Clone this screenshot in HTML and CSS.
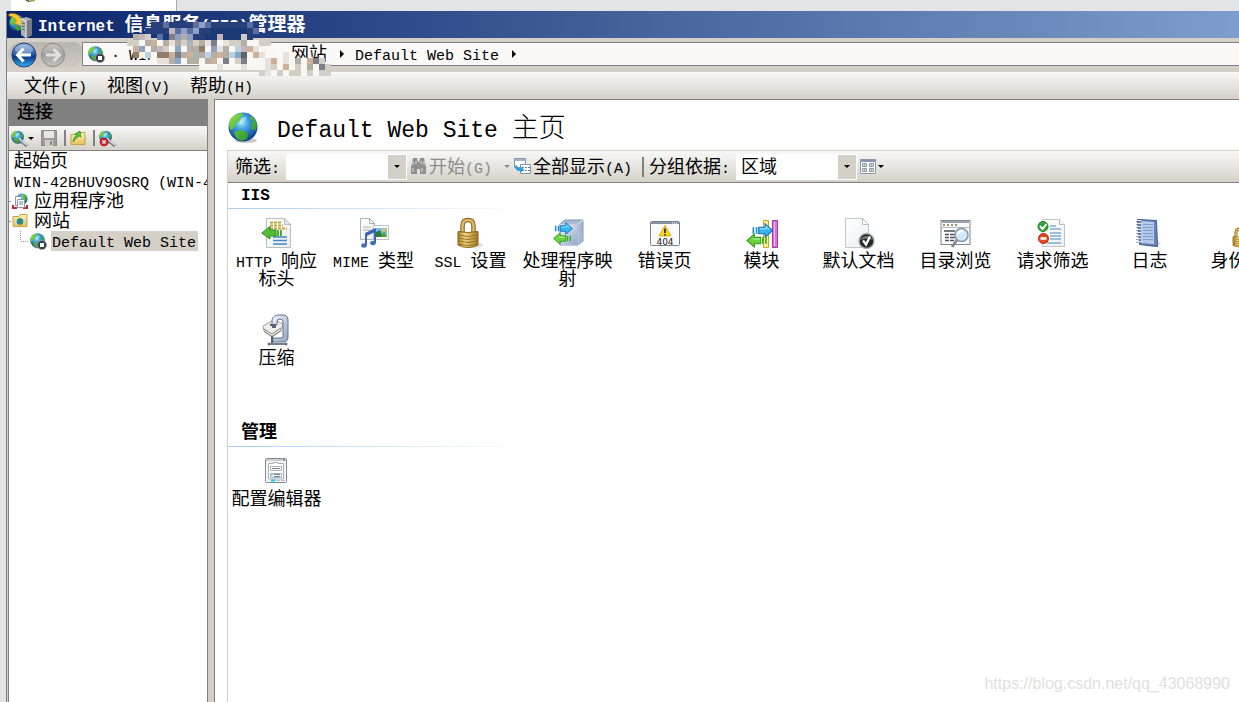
FILE: index.html
```html
<!DOCTYPE html>
<html lang="zh-CN">
<head>
<meta charset="utf-8">
<title>Internet 信息服务(IIS)管理器</title>
<link rel="stylesheet" href="styles.css">
</head>
<body>
<svg class="defs" aria-hidden="true">
  <defs>
    <radialGradient id="sea" cx="45%" cy="35%" r="65%">
      <stop offset="0" stop-color="#a5e9fa"/><stop offset=".4" stop-color="#3c9bdc"/><stop offset="1" stop-color="#123a8c"/>
    </radialGradient>
    <linearGradient id="land" x2="1" y2="1"><stop offset="0" stop-color="#8fe04a"/><stop offset="1" stop-color="#168a24"/></linearGradient>
    <linearGradient id="gold" x2="1"><stop offset="0" stop-color="#a87a1c"/><stop offset=".35" stop-color="#f0d686"/><stop offset="1" stop-color="#a3761d"/></linearGradient>
    <linearGradient id="steel" x2="1" y2="1"><stop offset="0" stop-color="#f4f7fc"/><stop offset="1" stop-color="#8ea3c4"/></linearGradient>
    <linearGradient id="paper" x2="1" y2="1"><stop offset="0" stop-color="#fff"/><stop offset="1" stop-color="#eceef0"/></linearGradient>
    <linearGradient id="folder" x2="0" y2="1"><stop offset="0" stop-color="#fdf3c0"/><stop offset="1" stop-color="#e9c254"/></linearGradient>
    <linearGradient id="blueball" x2="0" y2="1"><stop offset="0" stop-color="#8aa9d8"/><stop offset=".48" stop-color="#2658ab"/><stop offset=".55" stop-color="#0a2f86"/><stop offset="1" stop-color="#35b4f2"/></linearGradient>
    <linearGradient id="greyball" x2="0" y2="1"><stop offset="0" stop-color="#c9c8c5"/><stop offset=".5" stop-color="#a2a19e"/><stop offset="1" stop-color="#c4c3bf"/></linearGradient>
    <symbol id="globe" viewBox="0 0 32 32">
      <ellipse cx="18" cy="28.500" rx="11" ry="2.500" fill="#000" opacity=".22"/>
      <circle cx="15" cy="15" r="14.500" fill="url(#sea)"/>
      <path d="M1 13Q1 6 7 3l6-2 3 1-4 3 1 3-4 2-2 4-3 4-2-1zM23 4q5 3 6.300 9l-1.500 5-3.500 0-1-5 2-4-3-2zM6 20l6-2 4 1 4 3-1 5-5 2-5-2-2-4z" fill="url(#land)"/>
      <path d="M12 8q3-4 7-3l-2 4-6 4z" fill="#fff" opacity=".35"/>
    </symbol>
    <symbol id="site" viewBox="0 0 17 17">
      <use href="#globe" width="16" height="16"/>
      <circle cx="12" cy="12" r="4.600" fill="#3b4046" stroke="#9ca3a8" stroke-width=".7"/>
      <rect x="10" y="10" width="4" height="4" fill="#fff"/>
    </symbol>
    <symbol id="plug" viewBox="0 0 17 17">
      <use href="#globe" width="14" height="15"/>
      <path d="M8 9l3 3 5 4" stroke="#6f7f8d" stroke-width="3" fill="none"/><path d="M8 8l4 4 4 3" stroke="#dfe8ee" stroke-width="1.200" fill="none"/>
    </symbol>
    <symbol id="page" viewBox="0 0 32 32">
      <path d="M5.500 1.500h18l6 6v23h-24z" fill="url(#paper)" stroke="#b7bcc0"/><path d="M23.500 1.500v6h6z" fill="#e5e8ea" stroke="#b7bcc0"/>
    </symbol>
    <symbol id="right" viewBox="0 0 20 14"><path d="M1 4v6M4 4v6" stroke="#178bd2" stroke-width="1.500"/><path d="M6 4h6V.800L19 7l-7 6.200V10H6z" fill="#37b4f2" stroke="#1672ba"/><path d="M7 5.500h6V3.300L16 6" stroke="#9ce2ff" fill="none"/></symbol>
    <symbol id="left" viewBox="0 0 20 14"><path d="M19 4v6M16 4v6" stroke="#35a91d" stroke-width="1.500"/><path d="M14 4H8V.800L1 7l7 6.200V10h6z" fill="#66d63c" stroke="#35961f"/><path d="M13 5.500H7" stroke="#c6f9ae"/></symbol>
    <symbol id="lock" viewBox="0 0 32 32">
      <ellipse cx="18" cy="28" rx="10" ry="3" fill="#000" opacity=".12"/>
      <path d="M7.500 16V9q0-6 5.500-6t5.500 6v7" fill="none" stroke="#876018" stroke-width="4.500"/><path d="M7.500 16V9q0-6 5.500-6t5.500 6v7" fill="none" stroke="#dcb964" stroke-width="2.500"/>
      <path d="M3 14.500q10 2 20 0V28q-10 5-20 0z" fill="url(#gold)" stroke="#8b641a"/><path d="M3 18q10 3 20 0M3 21q10 3 20 0M3 24q10 3 20 0M3 27q10 3 20 0" stroke="#9b7323" fill="none"/>
    </symbol>
  </defs>
</svg>

<div class="backdrop"><div class="backdrop-tab"><svg width="12" height="2" viewBox="0 0 12 2"><path d="M0 0h4l1 2H3z" fill="#59636f"/><path d="M5 0h5v1l-5 1z" fill="#8ab64e"/></svg></div></div>

<div class="window">
  <header class="titlebar">
    <svg width="26" height="26" viewBox="0 0 26 26"><circle cx="9" cy="11" r="8" fill="url(#sea)"/><path d="M3 7q2-5 7-4l2 3-5 4-1 4-4-2zM6 15l6-1 3 3-5 2z" fill="url(#land)"/><path d="M1 2q8-2 12 5l3-1-3 8-7-3 3-2Q6 4 1 4z" fill="#ffc62f" stroke="#d58a10" stroke-width=".7"/><path d="M13 7l5-2 6 2v16l-6 3-5-3z" fill="#aeb2b5"/><path d="M18 9l6-2v16l-6 3z" fill="#777c80"/><path d="M13 7l5 2v17" fill="none" stroke="#eceeef"/><path d="M14 11l3 1M14 14l3 1M14 17l3 1" stroke="#606568"/></svg>
    <h1><span class="mono">Internet </span>信息服务<span class="mono">(IIS)</span>管理器</h1>
  </header>

  <nav class="navbar" aria-label="地址栏">
    <div class="travel">
      <button type="button" aria-label="后退"><svg width="26" height="26" viewBox="0 0 26 26"><circle cx="13" cy="13" r="12" fill="url(#blueball)" stroke="#25406e"/><ellipse cx="13" cy="7.500" rx="9" ry="5" fill="#fff" opacity=".3"/><path d="M12.500 6.500L6.500 13l6 6.500M7 13h13" fill="none" stroke="#fff" stroke-width="3"/></svg></button>
      <button type="button" aria-label="前进" disabled><svg width="26" height="26" viewBox="0 0 26 26"><circle cx="13" cy="13" r="11.500" fill="url(#greyball)" stroke="#8a8986"/><path d="M13.500 7l6 6-6 6M19 13H6" fill="none" stroke="#e1e0dd" stroke-width="3"/></svg></button>
    </div>
    <div class="address">
      <svg width="17" height="17"><use href="#site"/></svg>
      <span class="crumb-server"><span class="mono">· WIN</span></span>
      <span class="crumb-sites">网站</span>
      <i class="chev"></i>
      <span><span class="mono">Default Web Site</span></span>
      <i class="chev"></i>
    </div>
    <svg class="mosaic" id="mosaic" width="222" height="54" viewBox="0 0 222 54" aria-hidden="true"></svg>
  </nav>

  <div class="menubar" role="menubar">
    <button type="button" role="menuitem"><span>文件<span class="mono">(F)</span></span></button>
    <button type="button" role="menuitem"><span>视图<span class="mono">(V)</span></span></button>
    <button type="button" role="menuitem"><span>帮助<span class="mono">(H)</span></span></button>
  </div>

  <div class="workspace">
    <aside class="connections">
      <h2>连接</h2>
      <div class="side-tools">
        <button type="button" aria-label="新建连接"><svg width="17" height="17"><use href="#plug"/></svg><i class="drop"></i></button>
        <button type="button" aria-label="保存" disabled><svg width="16" height="16" viewBox="0 0 16 16"><path d="M.500.500h15v15H.500z" fill="#9b9b9b" stroke="#8c8c8c"/><path d="M3 1h10v7H3z" fill="#e8e7e4"/><path d="M4 10h8v6H4z" fill="#d0cfcb"/><path d="M9 11h2v4H9z" fill="#858585"/></svg></button>
        <i class="bar"></i>
        <button type="button" aria-label="向上"><svg width="16" height="16" viewBox="0 0 16 16"><path d="M1 4.500h8l1-2h5v12H1z" fill="url(#folder)" stroke="#c9a045"/><path d="M3 12q1-6 4-7L5 4l5-3 1 6-2-1q-3 2-6 6z" fill="#58c43a" stroke="#2d8b24" stroke-width=".7"/></svg></button>
        <i class="bar"></i>
        <button type="button" aria-label="断开连接"><svg width="17" height="17" viewBox="0 0 17 17"><use href="#plug"/><circle cx="5" cy="12" r="4" fill="#d4232b" stroke="#8f1218" stroke-width=".6"/><path d="M3.400 10.400l3.200 3.200m0-3.200l-3.200 3.200" stroke="#fff" stroke-width="1.300"/></svg></button>
      </div>
      <ul class="tree">
        <li>起始页</li>
        <li><span><span class="mono">WIN-42BHUV9OSRQ (WIN-4</span></span></li>
        <li class="branch"><svg width="16" height="17" viewBox="0 0 16 17"><circle cx="10" cy="6" r="5.500" fill="url(#sea)"/><path d="M10 1l4 1 1 5-3 2z" fill="url(#land)"/><path d="M1 12v3h4M15 12v3h-4" stroke="#c3283a" stroke-width="2" fill="none"/><path d="M3.500 3.500h6v9h-6z" fill="#fff" stroke="#8b98a5"/><path d="M5.500 6.500h7v8h-7z" fill="#fff" stroke="#8b98a5"/><path d="M7 9h4M7 11h4" stroke="#6a86a8"/></svg>应用程序池</li>
        <li class="branch"><svg width="16" height="16" viewBox="0 0 16 16"><path d="M1 3.500h6l1-2h7v12H1z" fill="url(#folder)" stroke="#caa34a"/><circle cx="8" cy="8.500" r="3.300" fill="#257fc8"/><path d="M5 8q1-3 4-3l-2 4zM8 10l3-1-1 3z" fill="#2fa12f"/></svg>网站</li>
        <li class="leaf"><svg width="17" height="17"><use href="#site"/></svg><span class="selected"><span class="mono">Default Web Site</span></span></li>
      </ul>
    </aside>

    <main class="content">
      <div class="heading">
        <svg width="32" height="32"><use href="#globe"/></svg>
        <h2><span class="mono">Default Web Site </span>主页</h2>
      </div>
      <section class="features">
        <div class="filters">
          <label for="filter">筛选<span class="mono">:</span></label>
          <div class="combo"><input id="filter" type="text"><button type="button" aria-label="筛选记录"><i class="drop"></i></button></div>
          <button type="button" class="start" disabled><svg width="17" height="17" viewBox="0 0 17 17"><path d="M3 0h4l1 4h1l1-4h4l2 9v7h-6v-5H7v5H1V9z" fill="#8f8f8f"/><path d="M3 3v4M6 3v3M11 3v3M14 3v4M3 10v4M12 10v4" stroke="#dedede"/></svg><span>开始<span class="mono">(G)</span></span><i class="drop"></i></button>
          <button type="button" class="showall"><svg width="17" height="17" viewBox="0 0 17 17"><path d="M.500.500h11v9H.500z" fill="#fff" stroke="#8593aa"/><path d="M1 2h10" stroke="#a7b4c8" stroke-width="2"/><path d="M6.500 6.500h10v9h-10z" fill="#fff" stroke="#8593aa"/><path d="M8 9.500h8M8 12.500h8" stroke="#5b80bd" stroke-dasharray="2 1"/><path d="M1 8q0 5 5 5v2l4-3.500L6 8v2q-3 0-3-3z" fill="#279fd9"/></svg><span>全部显示<span class="mono">(A)</span></span></button>
          <i class="bar"></i>
          <label for="group">分组依据<span class="mono">:</span></label>
          <div class="combo"><select id="group"><option>区域</option></select><span class="face"><i class="drop"></i></span></div>
          <button type="button" class="view" aria-label="视图"><svg width="16" height="16" viewBox="0 0 16 16"><path d="M.500.500h15v14H.500z" fill="#fff" stroke="#8c96a7"/><path d="M1 2h14" stroke="#8794ad" stroke-width="2"/><g fill="#dce8db" stroke="#8497a7"><path d="M2.500 4.500h4v3h-4zM9.500 4.500h4v3h-4zM2.500 9.500h4v3h-4zM9.500 9.500h4v3h-4z"/></g><path d="M4 6h1M11 6h1" stroke="#5aa13c"/><path d="M4 11h1M11 11h1" stroke="#b65e38"/></svg><i class="drop"></i></button>
        </div>

        <h3><span class="mono">IIS</span></h3>
        <ul class="grid">
          <li><svg viewBox="0 0 32 32"><use href="#page"/><path d="M9 5.500h11M9 8.500h13M9 11.500h17" stroke="#bca72b" stroke-width="2" stroke-dasharray="3 1"/><path d="M12 20h14M12 23.500h14M12 27h14" stroke="#3f86c4" stroke-width="1.300"/><path d="M9 13V9.500L.800 16 9 22v-3h6v-6z" fill="#54bd36" stroke="#31871f"/><path d="M17 13v6M20 13v6" stroke="#49ad31" stroke-width="2"/></svg><span><span class="mono">HTTP </span>响应标头</span></li>
          <li><svg viewBox="0 0 32 32"><path d="M2.500 1.500h9l5 5v16h-14z" fill="url(#paper)" stroke="#aab0b5"/><path d="M11.500 1.500v5h5M5 10h8M5 13h7" fill="none" stroke="#aab0b5"/><path d="M15.500 8.500h15v14h-15z" fill="#fff" stroke="#bbc0c5"/><path d="M18 11h11v9H18z" fill="#7cbcf5"/><path d="M18 20v-5l4-2 3 7z" fill="#267f32"/><path d="M23 20l3-6 3 6z" fill="#519f35"/><circle cx="26" cy="13" r="1.800" fill="#f5c43b"/><path d="M8 28V17l9-4.500V26" fill="none" stroke="#3c66b5" stroke-width="2"/><path d="M8 17.500l9-4.500" stroke="#3c66b5" stroke-width="3.500"/><ellipse cx="6" cy="28.500" rx="2.800" ry="2.200" fill="#426fbd"/><ellipse cx="15" cy="26" rx="2.800" ry="2.200" fill="#426fbd"/></svg><span><span class="mono">MIME </span>类型</span></li>
          <li><svg viewBox="0 0 32 32"><use href="#lock"/></svg><span><span class="mono">SSL </span>设置</span></li>
          <li><svg viewBox="0 0 32 32"><path d="M8 7l5-4h18v21l-5 4H8z" fill="#a6b9d3" stroke="#8297b9"/><path d="M8 7h18v21H8z" fill="url(#steel)" stroke="#b7c5da"/><path d="M26 7l5-4" stroke="#e5edf8"/><use href="#right" x="2" y="5" width="20" height="13"/><use href="#left" x="0" y="15" width="20" height="13"/></svg><span>处理程序映射</span></li>
          <li><svg viewBox="0 0 32 32"><rect x="1.500" y="4.500" width="29" height="24" rx="1" fill="#fafafa" stroke="#78818a"/><path d="M2 6h28" stroke="#8795a2" stroke-width="2"/><path d="M23 6h6" stroke="#fff" stroke-dasharray="1 1"/><path d="M16 8.500L22 19H10z" fill="#fadb22" stroke="#d8a90c" stroke-linejoin="round"/><path d="M16 11.500v4.500M16 17v1.500" stroke="#332a08" stroke-width="1.800"/><text x="16" y="27.500" text-anchor="middle" class="code">404</text></svg><span>错误页</span></li>
          <li><svg viewBox="0 0 32 32"><path d="M17.500 3.500h5v27h-5z" fill="#fbef8b" stroke="#c6a52b"/><path d="M26.500 3.500h5v27h-5z" fill="#d678d4" stroke="#a23aa5"/><path d="M28.500 5v24" stroke="#edb7ec"/><use href="#right" x="6" y="6" width="22" height="15"/><use href="#left" x="0" y="16" width="21" height="15"/></svg><span>模块</span></li>
          <li><svg viewBox="0 0 32 32"><path d="M2.500 1.500h17l6 6v23h-23z" fill="url(#paper)" stroke="#c3c5c7"/><path d="M19.500 1.500v6h6z" fill="#fff" stroke="#b9bdc0"/><circle cx="23.500" cy="24" r="7.500" fill="#242729" stroke="#aaaead" stroke-width="1.500"/><path d="M17 23q6.500-8 13 0-6-3-13 0z" fill="#787c7e"/><path d="M20 23.500l3 4 4-8" fill="none" stroke="#fff" stroke-width="2.300"/></svg><span>默认文档</span></li>
          <li><svg viewBox="0 0 32 32"><rect x="1" y="3.500" width="29" height="24" fill="#fbfbfb" stroke="#7f8790"/><path d="M2 5h27" stroke="#9ba4af" stroke-width="2"/><path d="M3 8h14" stroke="#9a9372" stroke-width="2" stroke-dasharray="2 2"/><path d="M1 10.500h29" stroke="#b4bac2"/><path d="M4 14h11M5 17.500h4M10 17.500h5M5 20.500h4M10 20.500h5M5 23.500h4M10 23.500h4" stroke="#4d5257" stroke-width="1.300"/><path d="M17 23l-5 7" stroke="#858a90" stroke-width="3"/><circle cx="21.500" cy="18" r="6.500" fill="#d0eafa" stroke="#8799a9" stroke-width="1.500"/><path d="M18 17q2-4 5-3" stroke="#fff" stroke-width="2" fill="none"/></svg><span>目录浏览</span></li>
          <li><svg viewBox="0 0 32 32"><path d="M5.500 2.500h17l5 5v22h-22z" fill="url(#paper)" stroke="#bfc4c8"/><path d="M22.500 2.500v5h5" fill="#fff" stroke="#b2b7bb"/><path d="M13 9h6M13 12h11M13 16h11M13 19h11M13 22h11M10 26h14" stroke="#4586c3"/><circle cx="6" cy="9.500" r="5" fill="#38a53b" stroke="#247326"/><path d="M3 9l2.500 3 4-5" fill="none" stroke="#fff" stroke-width="1.800"/><circle cx="6.500" cy="21.500" r="5" fill="#e44622" stroke="#b52d12"/><path d="M3.500 21.500h6" stroke="#fff" stroke-width="2.500"/></svg><span>请求筛选</span></li>
          <li><svg viewBox="0 0 32 32"><path d="M22 22l5 4-4 4h-8z" fill="#000" opacity=".12"/><path d="M3.500 2.500l19 1 1 26-18-2z" fill="#6583b7" stroke="#3e5c93"/><path d="M7 4l13 1v22l-13-1z" fill="#b5cae8"/><path d="M9 7.500h10M9 10.500h10M9 13.500h10M9 16.500h10M9 19.500h10M9 22.500h10" stroke="#7d9cc8"/><path d="M5 3v24" stroke="#e9edf2" stroke-width="4" stroke-dasharray="1 2"/><path d="M3 4v23" stroke="#545d69" stroke-dasharray="1 2"/></svg><span>日志</span></li>
          <li><svg viewBox="0 0 32 32"><use href="#lock" y="9" width="21" height="23"/></svg><span>身份验证</span></li>
          <li><svg viewBox="0 0 32 32"><path d="M2 12l11-6 9 4-2 7-9 6-8-6z" fill="#eeeeeb" stroke="#a0a09d"/><path d="M3 15l8 5 9-6M3 17.500l8 5 9-6" fill="none" stroke="#7f8182"/><path d="M11 10V6q1-5 7-5h4q5 0 5 5v17q0 5-5 5H12v-4h8q2 0 2-2V8q0-3-3-3t-3 3v3h-5z" fill="url(#steel)" stroke="#657489"/><path d="M9 11h6M11 13h4M11 22v8" stroke="#59616b" stroke-width="2"/><path d="M8 30h17" stroke="#74808d" stroke-width="2"/><circle cx="8" cy="30" r="1.500" fill="#68727d"/><circle cx="25" cy="30" r="1.500" fill="#68727d"/></svg><span>压缩</span></li>
        </ul>

        <h3>管理</h3>
        <ul class="grid">
          <li><svg viewBox="0 0 32 32"><rect x="4.500" y="3.500" width="21" height="24" rx="1" fill="#f2f4f5" stroke="#858b92"/><path d="M5 5h20" stroke="#c9d0d6" stroke-width="2"/><path d="M22 5h2" stroke="#596472"/><path d="M7.500 24V8.500h5v-1h4v1h6V24z" fill="#fff" stroke="#a9b2bb"/><path d="M9.500 11.500h11v4h-11zM9.500 18.500h11v4h-11z" fill="#fff" stroke="#a8b3bb"/><path d="M11 13.500h8M13 19.500h6M13 21.500h6" stroke="#788590"/><path d="M11 19v2" stroke="#26aacb"/><path d="M10 25.500h4" stroke="#11cdf0" stroke-width="2"/><path d="M15 25.500h4M20 25.500h4" stroke="#b7bfc5"/></svg><span>配置编辑器</span></li>
        </ul>
      </section>
    </main>
  </div>
</div>
<div class="watermark">https://blog.csdn.net/qq_43068990</div>
<script src="mosaic.js"></script>
</body>
</html>
```
FILE: styles.css
```css
* { box-sizing: border-box; }
html, body { height: 100%; }
body {
  margin: 0;
  display: flex;
  flex-direction: column;
  overflow: hidden;
  background: #e3e4e6;
  color: #000;
  font: 400 18px/20px "Liberation Sans", "Noto Sans CJK SC", sans-serif;
}
h1, h2, h3, ul { margin: 0; padding: 0; }
ul { list-style: none; }
svg { display: block; flex: none; }
button, input, select {
  margin: 0; padding: 0; border: 0; border-radius: 0;
  background: none; color: inherit; font: inherit;
}
button { display: flex; align-items: center; }
.mono { font-family: "Liberation Mono", monospace; font-size: 15px; line-height: 10px; white-space: pre; }
.defs { position: absolute; width: 0; height: 0; }

.backdrop { flex: none; height: 11px; padding-left: 11px; }
.backdrop-tab { width: 166px; height: 11px; padding-left: 14px; background: #fff; border-right: 1px solid #aaa; }

.window {
  flex: 1; min-height: 0; margin-left: 6px;
  display: flex; flex-direction: column;
  border-left: 1px solid #808080; background: #d4d0c8;
}
.titlebar {
  flex: none; display: flex; align-items: center; gap: 4px; height: 27px;
  padding-left: 1px; color: #fff;
  background: linear-gradient(90deg, #0a246a, #7d9ecd);
}
.titlebar h1 { font-size: 19px; line-height: 26px; font-weight: 700; }
.titlebar .mono { font-size: 16px; }

.navbar { flex: none; position: relative; display: flex; height: 34px; padding: 4px 0 6px 1px; }
.travel {
  display: flex; align-items: center; gap: 3px; width: 74px; height: 26px; padding-left: 3px;
  border-radius: 14px 8px 14px 14px;
  background: linear-gradient(#b9b6af, #cfcbc3);
}
.address {
  flex: 1; display: flex; align-items: center; height: 24px; padding-left: 5px;
  border: 1px solid #808080; border-right: 0; background: #faf9f7;
}
.crumb-server { margin: 0 135px 0 6px; }
.chev {
  width: 0; height: 0; margin: 0 11px 0 13px;
  border: solid transparent; border-width: 4px 0 4px 4px; border-left-color: #000;
}
.mosaic { position: absolute; left: 108px; top: -16px; }

.menubar {
  flex: none; display: flex; align-items: center; gap: 20px; height: 27px; padding-left: 17px;
  background: linear-gradient(#f8f8f7, #d5d1c9);
}

.workspace { flex: 1; min-height: 0; display: flex; gap: 6px; padding-left: 1px; }
.connections {
  flex: none; width: 200px; overflow: hidden;
  border: solid #808080; border-width: 0 1px; background: #fff;
}
.connections h2 { height: 27px; padding-left: 8px; background: #808080; font-size: 18px; line-height: 27px; font-weight: 500; }
.side-tools {
  display: flex; align-items: center; gap: 7px; height: 25px; padding-left: 2px;
  border-bottom: 1px solid #808080; background: linear-gradient(#f8f8f7, #d5d1c9);
}
.drop {
  width: 0; height: 0; flex: none;
  border: solid transparent; border-width: 3px 3px 0; border-top-color: #000;
}
.bar { width: 2px; height: 16px; background: #808080; }
.side-tools .bar + button { margin-left: -3px; }
.tree { white-space: nowrap; }
.tree li { display: flex; align-items: center; height: 20px; padding-left: 5px; }
.tree li.branch { gap: 6px; padding-left: 3px; background: linear-gradient(#999, #999) 0 10px / 2px 1px no-repeat; }
.tree li.leaf {
  gap: 4px; padding-left: 21px;
  background:
    repeating-linear-gradient(90deg, #999 0 1px, #fff 1px 2px) 12px 10px / 8px 1px no-repeat,
    repeating-linear-gradient(#999 0 1px, #fff 1px 2px) 11px 0 / 1px 10px no-repeat;
}
.selected { padding: 0 2px 0 1px; background: #d4d0c8; }

.content {
  flex: 1; min-width: 0; display: flex; flex-direction: column; padding-left: 12px;
  border: solid #808080; border-width: 1px 0 0 1px; background: #fff;
}
.heading { flex: none; display: flex; align-items: center; gap: 17px; height: 50px; padding: 6px 0 0 1px; }
.heading h2 { font-size: 27px; line-height: 36px; font-weight: 300; }
.heading .mono { font-size: 23px; }
.features { flex: 1; border-left: 1px solid #d4d0c8; overflow: hidden; }
.filters {
  display: flex; align-items: center; height: 33px; padding-left: 7px; white-space: nowrap;
  border: solid #d4d0c8; border-width: 1px 0; border-bottom-color: #808080;
  background: linear-gradient(#f8f8f7, #d5d1c9);
}
.combo { display: flex; width: 121px; height: 26px; margin: 0 3px 0 6px; padding: 1px; background: #fff; }
.combo input { flex: 1; min-width: 0; }
.combo select { flex: 1; min-width: 0; padding-left: 4px; appearance: none; }
.combo button, .face { display: flex; align-items: center; justify-content: center; width: 18px; background: #d4d0c8; }
.start { gap: 2px; margin-right: 4px; color: #8e8c88; }
.start .drop { margin-left: 10px; border-top-color: #8e8c88; }
.showall { gap: 2px; margin-right: 10px; }
.filters .bar { height: 20px; margin-right: 5px; }
.view { gap: 2px; }

.features h3 {
  height: 26px; padding-left: 13px; font-size: 18px; line-height: 22px; font-weight: 700;
  background: linear-gradient(90deg, #a9cdf0, #fff) 0 100% / 300px 1px no-repeat;
}
.features h3 .mono { font-size: 16px; }
.grid { display: grid; grid-template-columns: repeat(11, 97px); grid-auto-rows: 97px; padding-top: 8px; }
.grid + h3 { margin-top: 10px; }
.grid li { display: flex; flex-direction: column; align-items: center; gap: 3px; text-align: center; line-height: 18px; }
.grid li > span { width: 91px; }
.grid svg { width: 32px; height: 32px; }
.code { font: 400 9px "DejaVu Sans", sans-serif; fill: #222; }

.watermark {
  position: absolute; right: 9px; bottom: 8px;
  color: #e0e0e0; font: 400 16px/20px "Liberation Sans", sans-serif;
}
```
FILE: mosaic.js
```js
// Pixelated cover over the server name in the title and address bars.
const palette = {
  n: '#27407a', N: '#1b3877', b: '#5a70a0', B: '#8fa0c4', p: '#c3b4bd',
  g: '#d4cfc6', w: '#f9f7f4', G: '#b5aea6', t: '#a8b4b8', d: '#7c7f88',
  y: '#fbf5d8', o: '#cdb098', s: '#b8d4e4', k: '#5c6668', r: '#8d7d6a',
  c: '#86a8c2', e: '#e6e1da'
};
const rows = [
  '......nnbnnnnbBbnnnnnnbn',
  '.....nnnnpbBbBnnNNNNNNnb',
  '...Gpg.bNdBGBnnNNpNNNgn.',
  '..ggwGowGeGgtgGedweggGwwgg',
  '...oBwGpgwcwGGrwBeGwspoewww',
  '...ryswrrodGotGsGoGsckwoeww.ew',
  '......weeGcwGGwGowdwgdwwweowewGwodg',
  '..............wwwewwwewwwegwowgwGwdg',
  '........................gewgwggwgwgg'
];
const svg = document.getElementById('mosaic');
rows.forEach((row, y) => [...row].forEach((key, x) => {
  if (!palette[key]) return;
  const cell = document.createElementNS('http://www.w3.org/2000/svg', 'rect');
  cell.setAttribute('x', x * 6);
  cell.setAttribute('y', y * 6);
  cell.setAttribute('width', 6);
  cell.setAttribute('height', 6);
  cell.setAttribute('fill', palette[key]);
  svg.appendChild(cell);
}));
```
